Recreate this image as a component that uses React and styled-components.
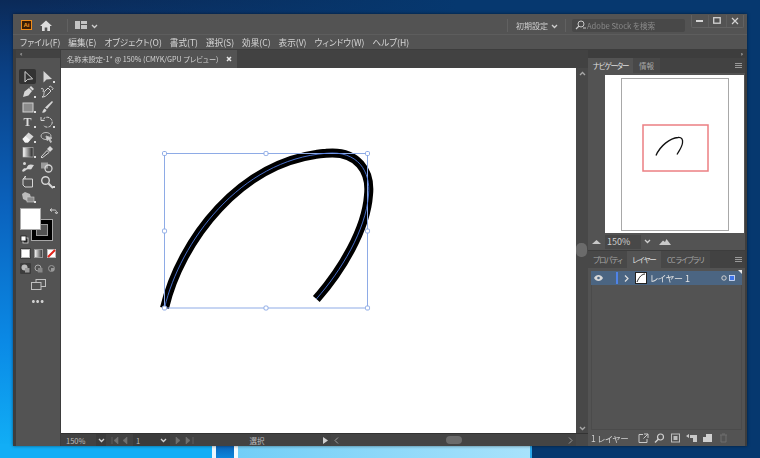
import React from 'react';
import styled, { createGlobalStyle } from 'styled-components';

const Global = createGlobalStyle`
  html, body { margin: 0; padding: 0; background: #06386f; }
  * { box-sizing: border-box; }
`;
const FONT = `"Noto Sans CJK JP", "Noto Sans", "Liberation Sans", sans-serif`;

const Desktop = styled.div`
  position: relative; width: 760px; height: 458px; overflow: hidden;
  padding: 14px 13px 12px 13px; font-family: ${FONT};
  background:
    linear-gradient(90deg, rgba(6,56,111,0) 0, rgba(6,56,111,0) 5%, #06386f 60%),
    linear-gradient(180deg, #0b2a58 0%, #0a3f82 15%, #0a62bd 45%, #0a8ae6 75%, #12b2f7 100%);
`;
const Pane = styled.div`
  position: absolute; bottom: 0; height: 14px; left: ${p => p.$l}px; width: ${p => p.$w}px; background: ${p => p.$c};
`;
const Window = styled.div`
  position: relative; width: 734px; height: 432px; background: #535353;
  display: flex; flex-direction: column; color: #d2d2d2; font-feature-settings: "palt";
  box-shadow: 0 0 3px rgba(0,0,0,.5); filter: blur(.35px);
`;
const TitleBar = styled.div`display: flex; align-items: center; height: 20px; padding: 2px 0 0 8px;`;
const AiLogo = styled.div`
  width: 11px; height: 10px; background: #3a1d04; border: 1px solid #f08c1a; color: #f59a23;
  font: bold 6px/8px "Liberation Sans", sans-serif; text-align: center;
`;
const HomeIcon = styled.svg`margin-left: 8px;`;
const Sep = styled.div`width: 1px; height: 13px; background: #616161; margin: ${p => p.$m};`;
const ChevBox = styled.span`line-height: 0; margin: ${p => p.$m};`;
const Right = styled.div`margin-left: auto; display: flex; align-items: center; position: relative;`;
const Workspace = styled.span`font-size: 8px; color: #cfcfcf; width: 30px; white-space: nowrap;`;
const Search = styled.div`
  width: 113px; height: 13px; background: #484848; border-radius: 2px; margin-right: 62px;
  display: flex; align-items: center; gap: 1px; padding-left: 3px;
  font-size: 7.6px; color: #8a8a8a; white-space: nowrap;
`;
const Caps = styled.div`
  position: absolute; right: 3px; top: -4px; width: 53px; height: 13px; display: flex;
  border: 1px solid #626262; border-top: 0; border-radius: 0 0 2px 2px;
`;
const Cap = styled.div`flex: 1; display: flex; align-items: center; justify-content: center; border-left: ${p => p.$first ? '0' : '1px solid #5e5e5e'};`;

const MenuBar = styled.div`
  display: flex; gap: 8px; height: 15px; padding-left: 7px; align-items: center;
  font-size: 8.6px; line-height: 15px; color: #d4d4d4; white-space: nowrap; border-top: 1px solid #5d5d5d;
`;
const Work = styled.div`flex: 1; display: flex; min-height: 0; background: #3d3d3d; padding: 1px 2px 0 3px;`;
const ToolPanel = styled.div`width: 44px; background: #535353; display: flex; flex-direction: column; align-items: center; margin-right: 1px;`;
const PanelGrip = styled.div`
  align-self: stretch; height: 8px; background: #424242; font-size: 6px; line-height: 7px; color: #bdbdbd; padding-left: 4px;
  letter-spacing: -1px;
`;
const ToolGrid = styled.div`display: grid; grid-template-columns: 19px 19px; grid-auto-rows: 15px; margin-top: 11px;`;
const ToolBtn = styled.div`
  position: relative; display: flex; align-items: center; justify-content: center;
  border-radius: 2px; background: ${p => p.$on ? '#333333' : 'transparent'}; margin-right: 2px;
  &::after { content: ''; display: ${p => p.$more ? 'block' : 'none'}; position: absolute; right: 0; bottom: 1px; width: 2px; height: 2px; background: #ddd; }
`;
const ToolText = styled.span`font: bold 12px/14px "Liberation Serif", serif; color: #dcdcdc;`;
const ColorBox = styled.div`position: relative; width: 34px; height: 34px; margin: 4px 3px 0 0; flex: none;`;
const Fill = styled.div`position: absolute; left: 0; top: 0; width: 21px; height: 22px; background: #fff; border: 1px solid #aaa; z-index: 1;`;
const Stroke = styled.div`
  position: absolute; left: 11px; top: 11px; width: 22px; height: 22px; background: #000; border: 1px solid #a8a8a8;
  &::after { content: ''; position: absolute; inset: 4px; border: 1px solid #9a9a9a; background: #535353; }
`;
const SwapIcon = styled.svg`position: absolute; right: -4px; top: 0;`;
const DefaultIcon = styled.svg`position: absolute; left: 0; bottom: -2px; z-index: 2;`;
const ModeRow = styled.div`display: flex; gap: 2px; margin-top: ${p => p.$mt}px;`;
const Mode = styled.div`
  width: 11px; height: 11px; display: flex; align-items: center; justify-content: center;
  border-radius: 1px; background: ${p => p.$on ? '#3c3c3c' : 'transparent'};
`;
const ScreenIcon = styled.svg`margin-top: 5px;`;
const Dots = styled.div`font-size: 10px; line-height: 10px; letter-spacing: .5px; color: #d0d0d0; margin-top: 5px; font-weight: bold;`;

const Center = styled.div`flex: 1; display: flex; flex-direction: column; min-width: 0;`;
const TabBar = styled.div`height: 18px; display: flex; background: #424242; flex: none;`;
const DocTab = styled.div`
  width: 176px; background: #535353; padding: 0 5px 0 6px; display: flex; align-items: center; justify-content: space-between;
  font-size: 7.2px; color: #d2d2d2; white-space: nowrap;
`;
const CanvasRow = styled.div`flex: 1; display: flex; min-height: 0;`;
const Canvas = styled.div`flex: 1; background: #fff; position: relative; line-height: 0;`;
const VBar = styled.div`
  width: 12px; background: #484848; position: relative; display: flex; flex-direction: column; align-items: center; justify-content: space-between; padding: 3px 0 2px;
`;
const VThumb = styled.div`position: absolute; left: 0; top: 175px; width: 11px; height: 14px; background: #6b6b6b; border-radius: 5px;`;
const Status = styled.div`
  height: 13px; display: flex; align-items: center; background: #424242; font-size: 7.5px; color: #bdbdbd; white-space: nowrap; border-top: 1px solid #333; flex: none;
`;
const StatField = styled.div`width: ${p => p.$w}px; height: 12px; background: ${p => p.$bg || 'transparent'}; display: flex; align-items: center; padding-left: ${p => p.$pl || 0}px; justify-content: ${p => p.$c ? 'center' : 'flex-start'};`;
const HTrack = styled.div`flex: 1; height: 12px; position: relative; background: #444; display: flex; align-items: center; justify-content: space-between; padding: 0 3px;`;
const HThumb = styled.div`position: absolute; left: 115px; top: 2px; width: 16px; height: 8px; background: #6b6b6b; border-radius: 4px;`;

const Dock = styled.div`width: 157px; display: flex; flex-direction: column; background: #535353;`;
const DockGrip = styled.div`height: 8px; background: #3d3d3d; font-size: 6px; line-height: 7px; text-align: right; padding-right: 3px; color: #bdbdbd; letter-spacing: -1px;`;
const Tabs = styled.div`height: ${p => p.$h}px; display: flex; background: #424242; font-size: 7.5px; align-items: stretch; position: relative; flex: none;`;
const Tab = styled.div`
  width: ${p => p.$w}px; display: flex; align-items: center; justify-content: center; white-space: nowrap; letter-spacing: ${p => p.$ls || 0}px;
  background: ${p => p.$on ? '#535353' : '#484848'}; color: ${p => p.$on ? '#e0e0e0' : '#a6a6a6'};
`;
const Burger = styled.div`
  position: absolute; right: 3px; top: 50%; margin-top: -3px; width: 7px; height: 6px;
  background: repeating-linear-gradient(180deg, #9a9a9a 0 1px, transparent 1px 2px);
`;
const Preview = styled.div`height: 160px; background: #535353; padding: 2px 1px 0 17px; flex: none; line-height: 0;`;
const PreviewInner = styled.div`height: 158px; background: #fff;`;
const ZoomBar = styled.div`height: 18px; display: flex; align-items: center; padding-left: 4px; background: #535353; font-size: 9px; color: #d0d0d0; flex: none; border-bottom: 1px solid #3d3d3d;`;
const ZoomInput = styled.div`width: 36px; height: 14px; background: #484848; line-height: 14px; padding-left: 2px; margin: 0 0 0 4px;`;
const LayerArea = styled.div`flex: 1; padding: 3px 3px 0; min-height: 0; display: flex; flex-direction: column;`;
const LayerRow = styled.div`
  position: relative; height: 14px; background: #4b6582; display: flex; align-items: center; font-size: 9px; color: #e4e4e4; flex: none; padding-left: 3px;
`;
const BlueBar = styled.div`width: 2px; height: 12px; background: #4f83e8; margin: 0 6px 0 13px;`;
const Thumb = styled.div`width: 12px; height: 12px; background: #fff; border: 1px solid #222; margin: 0 3px 0 6px; line-height: 0;`;
const Corner = styled.div`position: absolute; right: 0; top: -1px; border-top: 4px solid #e8e8e8; border-left: 4px solid transparent;`;
const LayerName = styled.span`width: 71px;`;
const TargetSquare = styled.svg`margin-left: 2px;`;
const LayerRest = styled.div`flex: 1; border: 1px solid #4b4b4b; border-top: 0;`;
const LayerFoot = styled.div`height: 16px; display: flex; align-items: center; font-size: 8.5px; color: #d0d0d0; padding-left: 3px; flex: none; white-space: nowrap;`;
const FootLabel = styled.span`width: 47px;`;
const FootIcons = styled.div`display: flex; gap: 5px;`;

const Chev = ({ c = '#cfcfcf', up, w = 7 }) => (
  <svg width={w} height="5" viewBox="0 0 7 5"><path d={up ? 'M1 4 3.5 1.5 6 4' : 'M1 1 3.5 3.5 6 1'} fill="none" stroke={c} strokeWidth="1.3" /></svg>
);
const Ic = ({ children, s = 14 }) => <svg width={s} height={s} viewBox="0 0 14 14">{children}</svg>;
const C = '#d6d6d6';

const tools = [
  { on: true, i: <path d="M4 1.5v10.5l2.6-2.6 5-.6z" fill="none" stroke={C} /> },
  { more: true, i: <path d="M3.5 1v11.5l3-3 5.5-.5z" fill={C} /> },
  { more: true, i: <g fill={C}><path d="M2 12l1.5-5.5L8 3l3 3-3.500 4.500z" /><path d="M8.500 2.500l1.500-1.500 3 3-1.500 1.500z" /></g> },
  { i: <g fill="none" stroke={C}><path d="M2 12c3-1 1-4 3-6l3-3 3 3-3 3c-2 2-3 3-6 3z" /><path d="M9 2l1.500-1 2.500 2.500-1 1.500" /><path d="M1 4c2-2 3 1 2 3" /></g> },
  { more: true, i: <rect x="2" y="3" width="10" height="9" fill="#8b8b8b" stroke="#cfcfcf" /> },
  { i: <g fill={C}><path d="M12 1l1 1-6 7-2-1.500z" /><path d="M4.500 8.500l2 1.500c-.5 2-2.500 3-4.500 2.500 1-1 1-3 2.500-4z" /></g> },
  { i: <ToolText>T</ToolText>, raw: true, moreT: true },
  { more: true, i: <g fill="none" stroke={C}><path d="M3 4.500A5 5 0 1 1 3.500 10.500" strokeDasharray="3 1" /><path d="M1 2v3.500h3.500" /></g> },
  { more: true, i: <g><path d="M1.500 9l6-6.500 5 4-5.500 6H4z" fill={C} /><path d="M1.500 9l3-3 4.500 4-2 2.500H4z" fill="#f4f4f4" /></g> },
  { i: <g fill="none" stroke="#bbb"><ellipse cx="6" cy="6" rx="5" ry="3.500" /><path d="M6 6l6 2-2 1 1.500 3-1 .5-1.500-3-2 1z" fill="#ccc" /></g> },
  { more: true, grad: true },
  { i: <g fill={C}><path d="M2 13l-1-1 6-6.500 2 2z" fill="none" stroke={C} /><path d="M7 4l3-3 3 3-3 3z" /></g> },
  { i: <g fill={C}><path d="M1 11c2-5 4-1 5-4s4-3 7-2l-2 3c-1 3-4 0-6 2s-3 2-4 1z" /><circle cx="3.500" cy="3.500" r="1.500" /></g> },
  { i: <g><rect x="1" y="2.500" width="7" height="6" fill="#9a9a9a" /><circle cx="8.500" cy="8.500" r="3.500" fill="none" stroke={C} strokeWidth="1.3" /></g> },
  { i: <path d="M2 4h9.500v8H4L2 10zM4 1v3M2 4l3-3" fill="none" stroke={C} /> },
  { more: true, i: <g fill="none" stroke={C} strokeWidth="1.400"><circle cx="5.500" cy="5.500" r="3.800" /><path d="M8.500 8.500l4.500 4.500" strokeWidth="2" /></g> },
  { more: true, i: <g><path d="M1 4l3-2 5 2 1 4-4 3-4-2z" fill="#bbb" /><rect x="6" y="7" width="7" height="5" fill="#8a8a8a" stroke="#ccc" strokeWidth=".6" /></g> },
];

const nav = 'M656 155.500C660 146 670 138 678 137.500C682 137 683 140 682.500 143C682 147 679 151 677 154.500';
const curve = 'M103.500 240C119 174 179 92 265 85.300C297 82 310 104 307.500 127C305 162 280 203 255.300 231';
const handles = [[103.500, 85.500], [205, 85.500], [306.500, 85.500], [103.500, 163], [306.500, 163], [103.500, 240], [205, 240], [306.500, 240]];

export default function App() {
  return (
    <Desktop>
      <Global />
      <Pane $l={0} $w={212} $c="#12aef6" />
      <Pane $l={212} $w={4} $c="#e9f6fd" />
      <Pane $l={216} $w={18} $c="linear-gradient(180deg,#0a5fb4,#0c86dc)" />
      <Pane $l={234} $w={4} $c="#f3fbff" />
      <Pane $l={238} $w={292} $c="linear-gradient(90deg,#72cef7,#a8e2fb)" />
      <Pane $l={530} $w={2} $c="#2aa7ea" />
      <Window>
        <TitleBar>
          <AiLogo>Ai</AiLogo>
          <HomeIcon width="12" height="11" viewBox="0 0 12 11"><path d="M6 .5 12 6h-2v5H7.300V7.500H4.700V11H2V6H0z" fill="#dcdcdc" /></HomeIcon>
          <Sep $m="0 7px 0 15px" />
          <svg width="12" height="8" viewBox="0 0 12 8"><path d="M0 0h5v8H0zM6 0h6v3H6zM6 4h6v4H6z" fill="#c4c4c4" /></svg>
          <ChevBox $m="0 0 0 4px"><Chev /></ChevBox>
          <Right>
            <Sep $m="0 8px 0 0" />
            <Workspace>初期設定</Workspace>
            <ChevBox $m="0 7px 0 5px"><Chev /></ChevBox>
            <Sep $m="0 6px 0 0" />
            <Search>
              <svg width="11" height="10" viewBox="0 0 11 10"><circle cx="6" cy="4" r="3" fill="none" stroke="#c8c8c8" /><path d="M4 6 1 9M8 8h3" stroke="#c8c8c8" strokeWidth="1.200" /></svg>
              <span>Adobe Stock を検索</span>
            </Search>
            <Caps>
              <Cap $first><svg width="8" height="3"><rect y="1" width="7" height="2" fill="#d4d4d4" /></svg></Cap>
              <Cap><svg width="8" height="7"><rect x=".7" y=".7" width="6.500" height="5.500" fill="none" stroke="#d4d4d4" strokeWidth="1.300" /></svg></Cap>
              <Cap><svg width="8" height="8"><path d="M1 1l6 6M7 1 1 7" stroke="#d4d4d4" strokeWidth="1.200" /></svg></Cap>
            </Caps>
          </Right>
        </TitleBar>
        <MenuBar>
          {['ファイル(F)', '編集(E)', 'オブジェクト(O)', '書式(T)', '選択(S)', '効果(C)', '表示(V)', 'ウィンドウ(W)', 'ヘルプ(H)'].map(m => <span key={m}>{m}</span>)}
        </MenuBar>
        <Work>
          <ToolPanel>
            <PanelGrip>‹‹</PanelGrip>
            <ToolGrid>
              {tools.map((t, k) => (
                <ToolBtn key={k} $on={t.on} $more={t.more || t.moreT}>
                  {t.raw ? t.i : t.grad ? (
                    <svg width="14" height="14" viewBox="0 0 14 14">
                      <defs><linearGradient id="g1"><stop offset="0" stopColor="#fff" /><stop offset="1" stopColor="#222" /></linearGradient></defs>
                      <rect x="2" y="2.500" width="10" height="9.500" fill="url(#g1)" stroke="#bbb" strokeWidth=".6" />
                    </svg>
                  ) : <Ic>{t.i}</Ic>}
                </ToolBtn>
              ))}
            </ToolGrid>
            <ColorBox>
              <Fill />
              <Stroke />
              <SwapIcon width="9" height="8" viewBox="0 0 9 8"><path d="M1 2h4.500c1.500 0 2 1 2 2.500M6 4l1.500 2L9 4M3 .5 1 2l2 1.500" fill="none" stroke="#d0d0d0" /></SwapIcon>
              <DefaultIcon width="9" height="9" viewBox="0 0 9 9"><rect x="3" y="3" width="5" height="5" fill="#222" stroke="#ddd" strokeWidth=".8" /><rect x="1" y="1" width="5" height="5" fill="#fff" stroke="#222" strokeWidth=".8" /></DefaultIcon>
            </ColorBox>
            <ModeRow $mt={6}>
              <Mode $on><svg width="9" height="9"><rect x=".5" y=".5" width="8" height="8" fill="#fff" stroke="#bbb" /></svg></Mode>
              <Mode><svg width="9" height="9"><defs><linearGradient id="g2"><stop offset="0" stopColor="#fff" /><stop offset="1" stopColor="#333" /></linearGradient></defs><rect x=".5" y=".5" width="8" height="8" fill="url(#g2)" stroke="#999" /></svg></Mode>
              <Mode><svg width="9" height="9"><rect x=".5" y=".5" width="8" height="8" fill="#fff" stroke="#bbb" /><path d="M1 8 8 1" stroke="#e2231a" strokeWidth="2" /></svg></Mode>
            </ModeRow>
            <ModeRow $mt={4}>
              <Mode $on><svg width="9" height="9"><circle cx="3.500" cy="3.500" r="3" fill="#bbb" /><rect x="4" y="4" width="4.500" height="4.500" fill="#999" /></svg></Mode>
              <Mode><svg width="9" height="9"><circle cx="4" cy="4" r="3" fill="none" stroke="#aaa" /><rect x="4" y="4" width="4.500" height="4.500" fill="#888" /></svg></Mode>
              <Mode><svg width="9" height="9"><circle cx="4.500" cy="4.500" r="3" fill="none" stroke="#999" /><rect x="4" y="4" width="3" height="3" fill="#999" /></svg></Mode>
            </ModeRow>
            <ScreenIcon width="15" height="11" viewBox="0 0 15 11"><rect x="5" y=".5" width="9.500" height="7" fill="#555" stroke="#c0c0c0" /><rect x=".5" y="3.500" width="9.500" height="7" fill="#535353" stroke="#c0c0c0" /></ScreenIcon>
            <Dots>•••</Dots>
          </ToolPanel>
          <Center>
            <TabBar>
              <DocTab>
                <span>名称未設定-1* @ 150% (CMYK/GPU プレビュー)</span>
                <svg width="6" height="6"><path d="M1 1l4 4M5 1 1 5" stroke="#e8e8e8" strokeWidth="1.500" /></svg>
              </DocTab>
            </TabBar>
            <CanvasRow>
              <Canvas>
                <svg width="515" height="365" viewBox="0 0 515 365">
                  <path d={curve} fill="none" stroke="#000" strokeWidth="9" />
                  <rect x="103.500" y="85.500" width="203" height="154.500" fill="none" stroke="#8eabe6" strokeWidth="1" />
                  <path d={curve} fill="none" stroke="#4f7be0" strokeWidth=".9" />
                  {handles.map(([x, y]) => (
                    <rect key={x + '-' + y} x={x - 2} y={y - 2} width="4" height="4" rx="1.200" fill="#fff" stroke="#8eabe6" strokeWidth="1" />
                  ))}
                </svg>
              </Canvas>
              <VBar>
                <Chev c="#a8a8a8" up />
                <VThumb />
                <Chev c="#a8a8a8" />
              </VBar>
            </CanvasRow>
            <Status>
              <StatField $w={35} $pl={5}>150%</StatField>
              <StatField $w={10} $bg="#3b3b3b" $pl={2}><Chev /></StatField>
              <StatField $w={27} $pl={5}>
                <svg width="18" height="7" viewBox="0 0 18 7"><path d="M1 0v7M7 0 3 3.500 7 7zM16 0l-4 3.500L16 7z" fill="#707070" stroke="#707070" strokeWidth=".6" /></svg>
              </StatField>
              <StatField $w={24} $bg="#3b3b3b" $pl={3}>1</StatField>
              <StatField $w={13} $bg="#3b3b3b" $pl={3}><Chev /></StatField>
              <StatField $w={25} $pl={4}>
                <svg width="20" height="7" viewBox="0 0 20 7"><path d="M2 0l4 3.500L2 7zM12 0l4 3.500L12 7zM19 0v7" fill="#707070" stroke="#707070" strokeWidth=".6" /></svg>
              </StatField>
              <StatField $w={124} $c>選択</StatField>
              <StatField $w={12} $pl={4}><svg width="5" height="7"><path d="M0 0l5 3.500L0 7z" fill="#cfcfcf" /></svg></StatField>
              <HTrack>
                <svg width="5" height="7"><path d="M4 .5 1 3.500 4 6.500" fill="none" stroke="#9a9a9a" /></svg>
                <HThumb />
                <svg width="5" height="7"><path d="M1 .5 4 3.500 1 6.500" fill="none" stroke="#9a9a9a" /></svg>
              </HTrack>
              <StatField $w={12} $bg="#484848" />
            </Status>
          </Center>
          <Dock>
            <DockGrip>››</DockGrip>
            <Tabs $h={15}>
              <Tab $on $w={45} $ls={-1.2}>ナビゲーター</Tab>
              <Tab $w={27}>情報</Tab>
              <Burger />
            </Tabs>
            <Preview>
              <PreviewInner>
                <svg width="138" height="158" viewBox="605 75 138 158">
                  <rect x="621.500" y="78.500" width="107" height="152" fill="#fff" stroke="#a8a8a8" />
                  <rect x="643" y="125" width="65" height="46" fill="none" stroke="#ec7f82" strokeWidth="1.500" />
                  <path d={nav} fill="none" stroke="#111" strokeWidth="1.300" />
                </svg>
              </PreviewInner>
            </Preview>
            <ZoomBar>
              <svg width="9" height="5" viewBox="0 0 9 5"><path d="M0 5 4.500 1 9 5z" fill="#c8c8c8" /></svg>
              <ZoomInput>150%</ZoomInput>
              <ChevBox $m="0 8px 0 3px"><Chev /></ChevBox>
              <svg width="12" height="6" viewBox="0 0 12 6"><path d="M0 6 4 1.500 6 3 7.500 0 12 6z" fill="#c8c8c8" /></svg>
            </ZoomBar>
            <Tabs $h={17}>
              <Tab $w={39} $ls={-1}>プロパティ</Tab>
              <Tab $on $w={34} $ls={-1}>レイヤー</Tab>
              <Tab $w={49} $ls={-.8}>CC ライブラリ</Tab>
              <Burger />
            </Tabs>
            <LayerArea>
              <LayerRow>
                <svg width="9" height="6" viewBox="0 0 9 6"><path d="M0 3c2-4 7-4 9 0-2 4-7 4-9 0z" fill="#d8d8d8" /><circle cx="4.500" cy="3" r="1.300" fill="#4b6582" /></svg>
                <BlueBar />
                <svg width="5" height="7"><path d="M1 .5 4 3.500 1 6.500" fill="none" stroke="#e0e0e0" strokeWidth="1.200" /></svg>
                <Thumb><svg width="10" height="10"><path d="M1 9C3 4 6 1 9 1" fill="none" stroke="#222" /></svg></Thumb>
                <LayerName>レイヤー 1</LayerName>
                <svg width="6" height="6"><circle cx="3" cy="3" r="2.200" fill="none" stroke="#d0d0d0" /></svg>
                <TargetSquare width="6" height="6"><rect x=".5" y=".5" width="5" height="5" fill="#3f75e8" stroke="#dfe8fa" strokeWidth=".8" /></TargetSquare>
                <Corner />
              </LayerRow>
              <LayerRest />
            </LayerArea>
            <LayerFoot>
              <FootLabel>1 レイヤー</FootLabel>
              <FootIcons>
                <svg width="11" height="10" viewBox="0 0 11 10"><path d="M5 1.500H1v8h8V6M6 1h4v4M10 1 5.500 5.500" fill="none" stroke="#c8c8c8" /></svg>
                <svg width="11" height="10" viewBox="0 0 11 10"><circle cx="6.500" cy="4" r="3" fill="none" stroke="#d0d0d0" strokeWidth="1.200" /><path d="M4.500 6 1 9.500" stroke="#d0d0d0" strokeWidth="1.400" /></svg>
                <svg width="11" height="10" viewBox="0 0 11 10"><rect x="1.500" y="1" width="8" height="8" fill="none" stroke="#bcbcbc" /><rect x="3.500" y="3" width="4" height="4" fill="#bcbcbc" /></svg>
                <svg width="11" height="10" viewBox="0 0 11 10"><path d="M4 2h7v7H7V5H4zM0 3l3-2v4z" fill="#c8c8c8" /></svg>
                <svg width="11" height="10" viewBox="0 0 11 10"><path d="M1 1h9v8H1z" fill="#d0d0d0" /><path d="M1 1h3v3H1z" fill="#535353" /></svg>
                <svg width="11" height="10" viewBox="0 0 11 10"><path d="M2 2h7M3 2v7h5V2M4 1h3" fill="none" stroke="#6f6f6f" /></svg>
              </FootIcons>
            </LayerFoot>
          </Dock>
        </Work>
      </Window>
    </Desktop>
  );
}
